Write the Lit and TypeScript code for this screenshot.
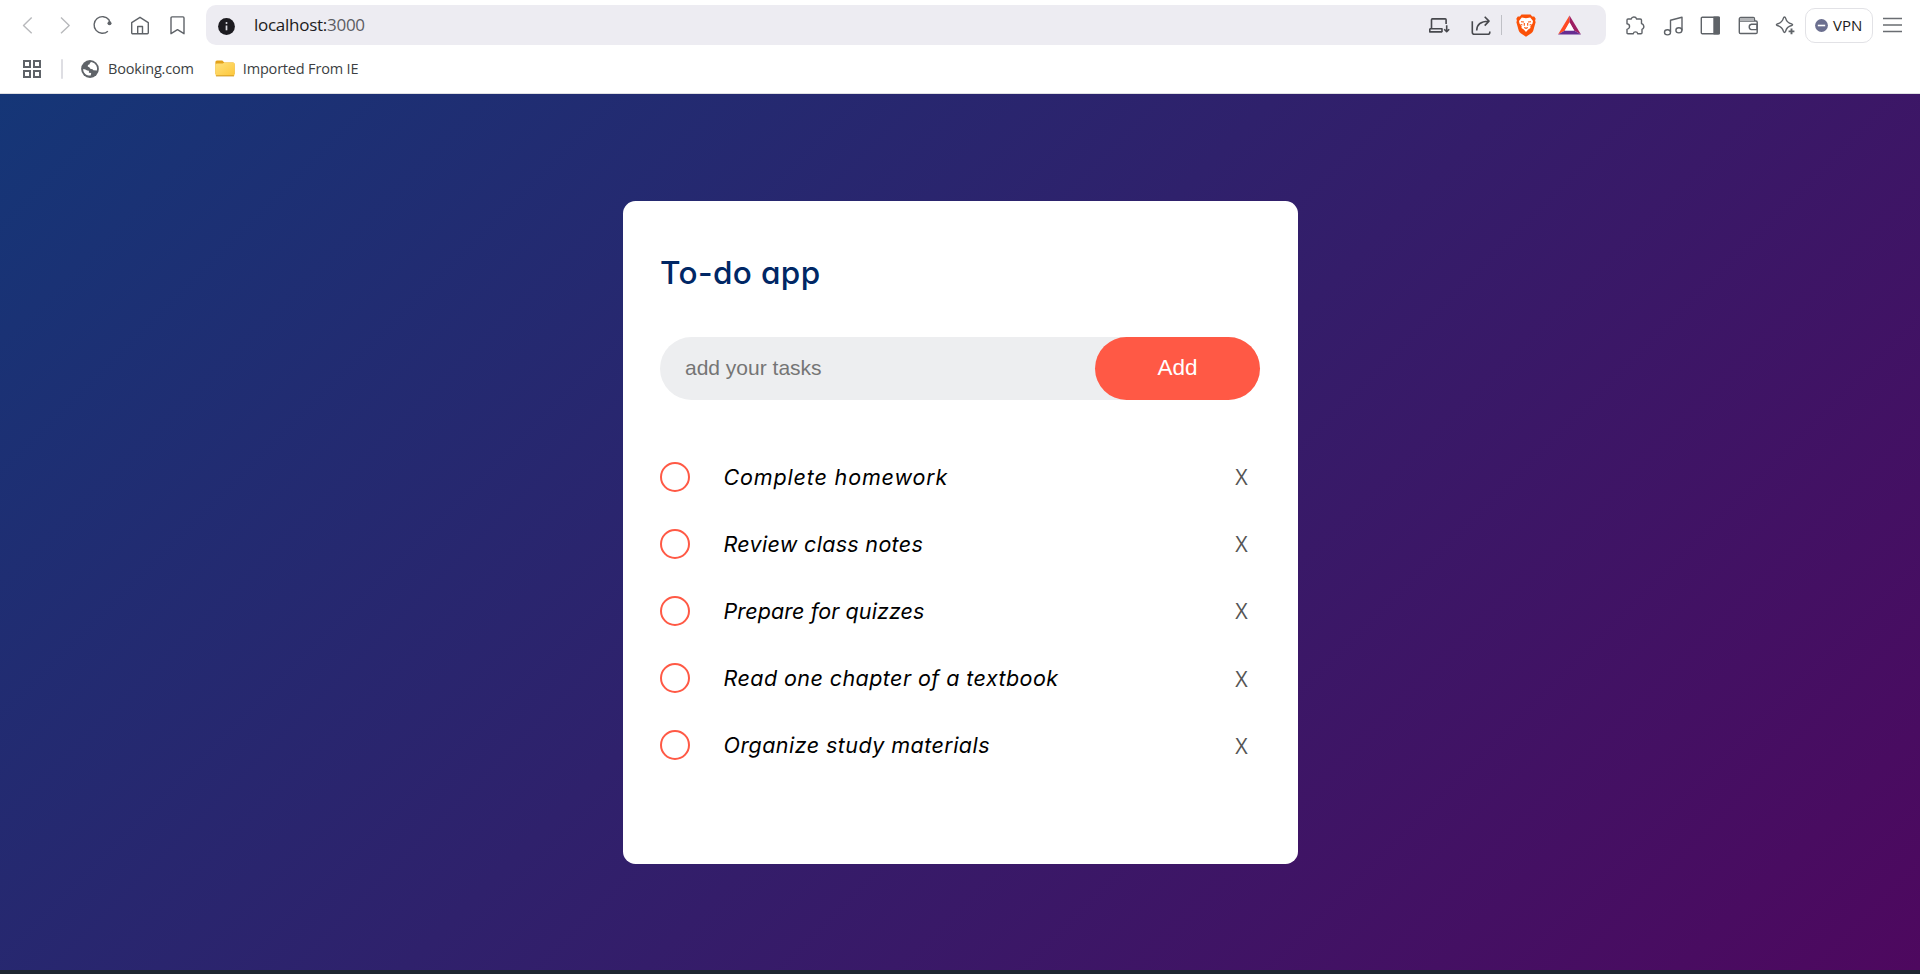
import { LitElement, html, css, svg } from "lit";
import { customElement, state } from "lit/decorators.js";
import { styleMap } from "lit/directives/style-map.js";

const icon = (body: unknown, cls = "") => html`<svg class="ico ${cls}" width="24" height="24" viewBox="0 0 24 24">${body}</svg>`;

const back = icon(svg`<path d="M15.700 4.500 7.500 12.500l8.200 7.800"/>`, "faint");
const forward = icon(svg`<path d="M8 4.500l8.200 8L8 20.300"/>`, "faint");
const reload = icon(svg`<path d="M16.900 18.200A8.300 8.300 0 1 1 17.900 6.800l1.100 3"/><circle cx="18.500" cy="10.300" r="2" fill="currentColor" stroke="none"/>`);
const home = icon(svg`<path d="M3.700 9.600 12 4.300l8.300 5.300v10.200a1 1 0 0 1-1 1H4.700a1 1 0 0 1-1-1zM9.700 20.800v-7.300h4.800v7.300"/>`);
const mark = icon(svg`<path d="M5 4.900q0-1 1-1h11q1 0 1 1V20.700l-6.500-4-6.500 4z"/>`);
const install = icon(svg`<path d="M4.500 15.500V6.800q0-.9.9-.9H18.200q.9 0 .9.900V11M2.600 15.700H15v3.200M2.800 15.700v3.200h12.400M19.700 12.300v6M17.200 16.200l2.500 2.500 2.500-2.500"/>`, "dark");
const share = icon(svg`<path d="M3.300 8.300V19.300q0 2 2 2H19q1.800 0 1.800-2V18.500M7.700 17.500Q7.800 8.300 19.500 8.200M15.700 3.800l4.300 4.300-4.300 4.500"/>`, "dark");
const puzzle = icon(svg`<path d="M8.300 6C8.700 3.500 12.800 3.300 13.600 6H17.200q1.300 0 1.300 1.300V10.500C21 11.300 22 15 19 16.300V19.800q0 1-1 1H14.800C14.200 18.200 10.800 18.200 10.200 20.800H5q-1 0-1-1V16.300C7.500 15.300 7.300 11.300 4 10.800V7q0-1 1-1z"/>`);
const music = icon(svg`<path d="M9.500 19V7.200l11.500-3V17.600"/><ellipse cx="6.500" cy="19.300" rx="3" ry="2.600"/><ellipse cx="17.900" cy="17.300" rx="3" ry="2.600"/>`);
const panel = icon(svg`<rect x="3.300" y="4.300" width="17.800" height="16.400" rx="1"/><path d="M16 4.300h5.200v16.400H16z" fill="currentColor"/>`);
const wallet = icon(svg`<path d="M3.300 6.500V19.300q0 1.200 1.200 1.200H20q1.200 0 1.200-1.200V9.200q0-1.200-1.200-1.200H4.500Q3.300 8 3.300 6.200T5 4.500H17.300q1.200 0 1.200 1.500V8"/><path d="M4 5h14v3H4z" fill="#b3b5b8" stroke="none"/><path d="M21 11.300h-5.600a2.700 2.700 0 0 0 0 5.300H21z"/>`);
const sparkle = icon(svg`<path d="M11.500 4q.8 0 1.100 1.200 1.200 4.600 6 5.700 2 .8 0 1.600-4.900 1.200-6 5.800-1.100 2.300-2.200 0-1.200-4.600-6.100-5.800-1.800-.8 0-1.600 5-1.200 6.100-5.700.3-1.200 1.100-1.200z"/><path d="M18.500 15.500v5.800M15.600 18.400h5.800" stroke-width="1.900"/>`);

const brave = html`<svg width="20" height="23" viewBox="0 0 20 23">
  <path d="M5.500.5h9l1.700 2 2-.1 1.500 2.300-.6 1.900.5 1.600-2.300 8.400q-.5 1.700-2 2.700L10 22.700l-5.300-3.400q-1.500-1-2-2.700L.4 8.200l.5-1.600L.3 4.700l1.500-2.300 2 .1z" fill="#fb5108"/>
  <path d="M5.800 3.500 10 4.300l4.200-.8 2.800 3.400-.5 2.600-2.200 3 .2 1.500-2.300 1.600L10 17.900l-2.200-2.300-2.300-1.600.2-1.500-2.200-3L3 6.900z" fill="#fff"/>
  <path d="M5 7.700l3 .3M15 7.700l-3 .3M8.300 9v2.800M11.700 9v2.800M8.200 13.500l1.800.8 1.800-.8M4.600 10.400l1.800.6M15.400 10.400l-1.800.6" fill="none" stroke="#fb5108" stroke-width="1.100"/></svg>`;

const bat = html`<svg width="23" height="20" viewBox="0 0 23 20">
  <path d="M11.500.5 0 19.500 7 15.500l4.500-8z" fill="#ff4a24"/><path d="M11.500.5 23 19.500 16 15.500l-4.500-8z" fill="#9e1f63"/>
  <path d="M0 19.500h23l-7-4H7z" fill="#662d91"/><path d="M11.500 7.300 16.200 15.500H6.800z" fill="#fff"/></svg>`;

const globe = html`<svg width="18" height="18" viewBox="0 0 18 18"><circle cx="9" cy="9" r="8.900" fill="#5f6368"/>
  <path d="M10.500 2q-2 .5-1.900 2.300Q6.300 4.600 6.700 6.500 8.600 7 9.300 8.700q2.800.2 3.100 1.600l3.500.2q.4-3-.6-4.900-1.500-2.800-4.800-3.600zM2.200 9q2.400 0 4 1.500l1.700.2v2.100l2.300.2-.5 2.600Q5 15.600 3.200 12.700 2 11 2.200 9z" fill="#fff"/></svg>`;

const folder = html`<svg width="20" height="17" viewBox="0 0 20 17"><defs><linearGradient id="f" x1="0" y1="0" x2="1" y2="1"><stop offset="0" stop-color="#ffe17c"/><stop offset="1" stop-color="#fdc73a"/></linearGradient></defs>
  <path d="M.4 2Q.4.400 2 .400h5.300l2 2.200H18q1.600 0 1.600 1.600V14H.4z" fill="#e3a21a"/><path d="M.4 5q0-1.500 1.500-1.500h5.800l1.800-1H18q1.600 0 1.600 1.600V14.500q0 1.600-1.600 1.600H2q-1.600 0-1.600-1.600z" fill="url(#f)"/><path d="M1 15.900h18" stroke="#c98e16" stroke-width=".9"/></svg>`;

@customElement("browser-bar")
class BrowserBar extends LitElement {
  static styles = css`
    :host { display: block; height: 93px; background: #fff; border-bottom: 1px solid #dfdfe3; font-family: "Open Sans", "Noto Sans", sans-serif; color: #3c3f43; }
    .tools { display: flex; align-items: center; height: 50px; padding-left: 8.75px; box-sizing: border-box; }
    .cell { width: 37.5px; flex: none; display: flex; justify-content: center; }
    .ico { fill: none; stroke: currentColor; stroke-width: 1.4; color: #5f6368; stroke-linejoin: round; display: block; flex: none; }
    .ico.faint { color: #b8b9bc; }
    .ico.dark { color: #47484d; stroke-width: 1.6; }
    svg { display: block; flex: none; }
    .url { width: 1400px; height: 40px; margin: 0 10.25px 0 9.75px; border-radius: 10px; background: #edecf2; display: flex; align-items: center; box-sizing: border-box; padding: 0 25px 0 12px; flex: none; }
    .info { width: 17px; height: 17px; margin: 2px 19px 0 0; }
    .host { font-size: 17px; letter-spacing: -0.27px; color: #1c1b20; flex: 1; white-space: nowrap; padding-bottom: 2px; }
    .host span { color: #5c5d63; }
    .rule { width: 1px; height: 20px; background: #bfc0c6; margin: 0 14px 0 8px; }
    .gap { margin-left: 18px; }
    .bat { margin-left: 22px; }
    .vpn { margin-left: 1.25px; width: 68px; height: 35px; box-sizing: border-box; border: 1px solid #e2e2e6; border-radius: 10px; display: flex; align-items: center; padding-left: 9px; gap: 5px; color: #1c1b20; font-size: 15px; }
    .menu { margin-left: 10px; }
    .marks { display: flex; align-items: center; height: 37px; padding-left: 23px; font-size: 14.5px; }
    .sep { width: 2px; height: 20px; background: #dedee3; margin: 0 18.5px 0 19.5px; border-radius: 1px; }
    .globe { margin-right: 9px; }
    .folder { margin: 0 8px 0 21px; }
    .label { white-space: nowrap; letter-spacing: -0.18px; }
  `;
  render() {
    return html`
      <div class="tools">
        ${[back, forward, reload, home, mark].map((i) => html`<div class="cell">${i}</div>`)}
        <div class="url">
          <svg class="info" viewBox="0 0 17 17"><circle cx="8.500" cy="8.500" r="8.400" fill="#1c1b20"/><path d="M8.500 7.500v4.800" stroke="#dcdce2" stroke-width="1.700"/><circle cx="8.500" cy="5" r="1" fill="#dcdce2"/></svg>
          <div class="host">localhost:<span>3000</span></div>
          ${install}<span class="gap">${share}</span><div class="rule"></div>${brave}<span class="bat">${bat}</span>
        </div>
        ${[puzzle, music, panel, wallet, sparkle].map((i) => html`<div class="cell">${i}</div>`)}
        <div class="vpn"><svg width="13" height="13" viewBox="0 0 13 13"><circle cx="6.500" cy="6.500" r="6.400" fill="#6b6f8f"/><path d="M2.800 6.500h7.400" stroke="#fff" stroke-width="1.600"/></svg><span>VPN</span></div>
        <svg class="menu" width="19" height="16" viewBox="0 0 19 16"><path d="M0 1.500h19M0 8h19M0 14.500h19" stroke="#6a6d72" stroke-width="1.300"/></svg>
      </div>
      <div class="marks">
        <svg width="18" height="18" viewBox="0 0 18 18" fill="none" stroke="#5f6368" stroke-width="2"><path d="M1 1h6v6H1zM11 1h6v6h-6zM1 11h6v6H1zM11 11h6v6h-6z"/></svg>
        <div class="sep"></div><span class="globe">${globe}</span><span class="label">Booking.com</span>
        <span class="folder">${folder}</span><span class="label">Imported From IE</span>
      </div>`;
  }
}

interface Task {
  text: string;
  tracking: number;
}

@customElement("todo-card")
class TodoCard extends LitElement {
  static styles = css`
    :host { display: block; width: 675px; height: 663px; background: #fff; border-radius: 12.5px; box-sizing: border-box; padding: 50px 37.5px 0; font-family: Inter, "Open Sans", sans-serif; font-feature-settings: "cv11"; }
    h2 { margin: 0; height: 86px; line-height: 44px; font-size: 31.5px; font-weight: 550; letter-spacing: 0.4px; color: #002765; white-space: nowrap; }
    .row { display: flex; height: 63px; border-radius: 32px; background: #edeef0; }
    input { flex: 1; min-width: 0; border: 0; background: transparent; padding: 0 25px 2px; font: 21px "Liberation Sans", Arial, sans-serif; outline: none; }
    input::placeholder { color: #757575; }
    button { width: 165px; border: 0; border-radius: 50px; padding: 0 0 2px; background: #ff5945; color: #fff; font: 22.5px "Liberation Sans", Arial, sans-serif; }
    ul { list-style: none; margin: 43px 0 0; padding: 0; }
    li { height: 67.2px; display: flex; align-items: center; }
    .dot { width: 30px; height: 30px; box-sizing: border-box; border: 2px solid #ff5945; border-radius: 50%; margin-right: 33.5px; }
    .task { flex: 1; font-style: italic; font-size: 21.5px; color: #000; white-space: nowrap; }
    .x { width: 50px; box-sizing: border-box; text-align: center; font: 21.5px "Open Sans", sans-serif; color: #555; margin-right: -6.5px; }
  `;
  @state() tasks: Task[] = [
    { text: "Complete homework", tracking: 0.85 },
    { text: "Review class notes", tracking: 0.31 },
    { text: "Prepare for quizzes", tracking: 0.1 },
    { text: "Read one chapter of a textbook", tracking: 0.43 },
    { text: "Organize study materials", tracking: 0.45 },
  ];
  render() {
    return html`<h2>To-do app</h2>
      <div class="row"><input placeholder="add your tasks" /><button>Add</button></div>
      <ul>${this.tasks.map((t) => html`<li><span class="dot"></span><span class="task" style=${styleMap({ letterSpacing: `${t.tracking}px` })}>${t.text}</span><span class="x">X</span></li>`)}</ul>`;
  }
}

@customElement("app-root")
class AppRoot extends LitElement {
  static styles = css`
    :host { display: flex; flex-direction: column; height: 974px; }
    .page { height: 876px; box-sizing: border-box; padding-top: 107px; display: flex; justify-content: center; align-items: flex-start; background: linear-gradient(135deg, #153677, #4e085f); }
    .strip { height: 4px; background: #1d2530; }
  `;
  render() {
    return html`<browser-bar></browser-bar><div class="page"><todo-card></todo-card></div><div class="strip"></div>`;
  }
}
